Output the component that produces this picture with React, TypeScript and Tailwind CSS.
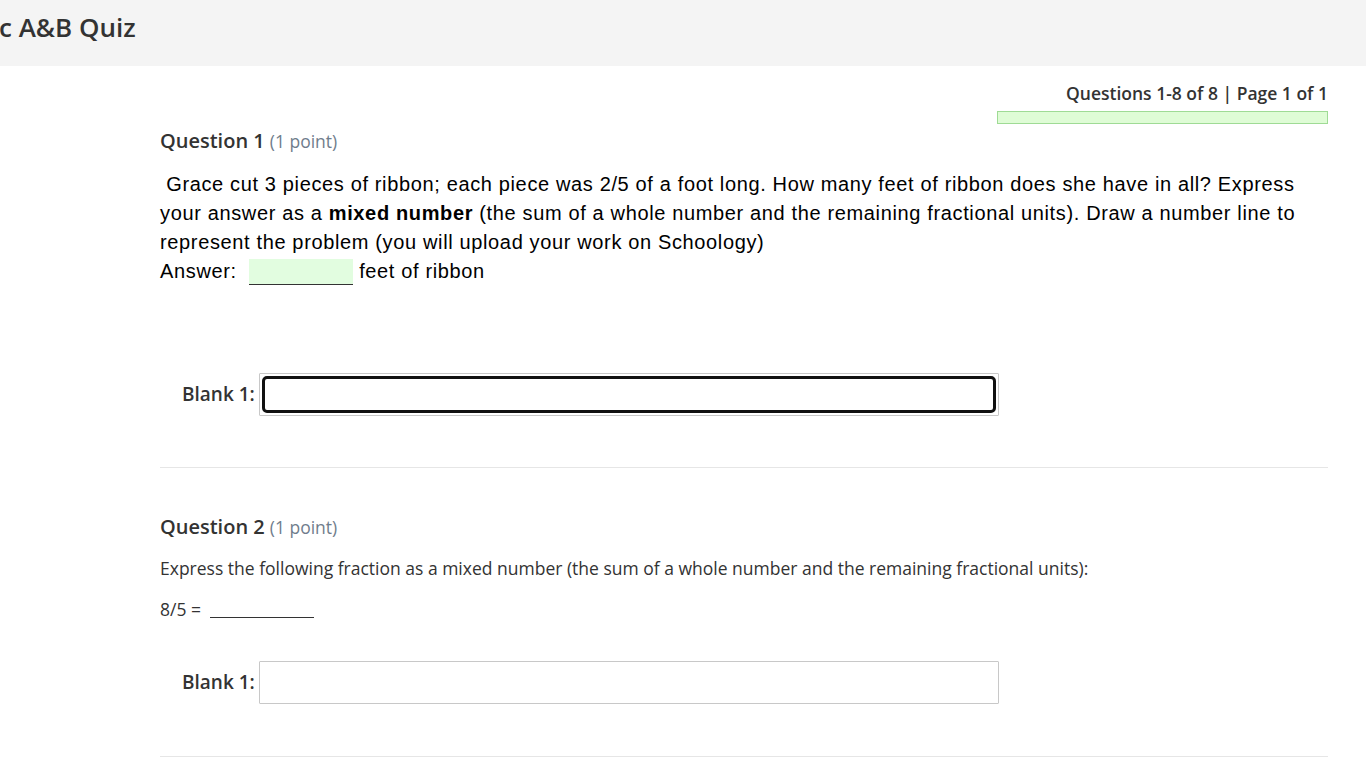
import { useState } from "react";

const openSans = "font-['Open_Sans',sans-serif]";

const BlankField = ({ focused }: { focused?: boolean }) => {
  const [value, setValue] = useState("");
  return (
    <div className="flex items-center pl-[22px]">
      <label className={`${openSans} text-[19px] text-[#333] font-semibold mr-[4px]`}>Blank 1:</label>
      <div className="w-[740px] h-[43px] border border-[#c8c8c8] rounded-[1px] p-[2px] bg-white">
        <input
          value={value}
          onChange={(e) => setValue(e.target.value)}
          className={
            "w-full h-full outline-none bg-white px-2 text-[16px] " +
            (focused ? "border-[3px] border-[#111] rounded-[5px]" : "border-0")
          }
        />
      </div>
    </div>
  );
};

const QuestionHeading = ({ n }: { n: number }) => (
  <div className={`${openSans} flex items-baseline`}>
    <span className="text-[20px] font-semibold text-[#333]">Question {n}</span>
    <span className="text-[17.5px] text-[#6f7d8c] ml-[5px]">(1 point)</span>
  </div>
);

export default function App() {
  return (
    <div className="min-h-screen bg-white">
      <div className="h-[66px] bg-[#f4f4f4] flex items-center">
        <h1 className={`${openSans} text-[26px] font-semibold text-[#333] -mt-[11px] -ml-[1px]`}>c A&amp;B Quiz</h1>
      </div>

      <div className="ml-[160px] w-[1168px]">
        <div className="flex flex-col items-end pt-[15px]">
          <div className={`${openSans} text-[17.5px] font-semibold text-[#333] leading-[24px]`}>
            Questions 1-8 of 8 | Page 1 of 1
          </div>
          <div className="mt-[6px] w-[331px] h-[13px] bg-[#dffcd6] border border-[#9fdb95]" />
        </div>

        <div className="mt-[2px]">
          <QuestionHeading n={1} />
          <div className="font-['Liberation_Sans',Arial,sans-serif] text-[20px] leading-[29px] text-black tracking-[0.64px] mt-[14px]">
            <p>
              &nbsp;Grace cut 3 pieces of ribbon; each piece was 2/5 of a foot long. How many feet of ribbon does she have in all? Express your answer as a <b>mixed number</b> (the sum of a whole number and the remaining fractional units). Draw a number line to represent the problem (you will upload your work on Schoology)
            </p>
            <p className="flex items-center">
              <span>Answer:&nbsp;&nbsp;</span>
              <span className="inline-block w-[104px] h-[26px] bg-[#e2fde0] border-b border-[#333] mr-[6px]" />
              <span>feet of ribbon</span>
            </p>
          </div>
          <div className="mt-[87px]">
            <BlankField focused />
          </div>
          <div className="mt-[51px] border-b border-[#e6e6e6]" />
        </div>

        <div className="pt-[44px]">
          <QuestionHeading n={2} />
          <div className={`${openSans} text-[17.5px] text-[#333] leading-[24px]`}>
            <p className="mt-[14px]">
              Express the following fraction as a mixed number (the sum of a whole number and the remaining fractional units):
            </p>
            <p className="mt-[17px] flex items-end">
              <span>8/5 =&nbsp;&nbsp;</span>
              <span className="inline-block w-[104px] border-b border-[#333] mb-[3px]" />
            </p>
          </div>
          <div className="mt-[40px]">
            <BlankField />
          </div>
          <div className="mt-[52px] border-b border-[#e6e6e6]" />
        </div>
      </div>
    </div>
  );
}
